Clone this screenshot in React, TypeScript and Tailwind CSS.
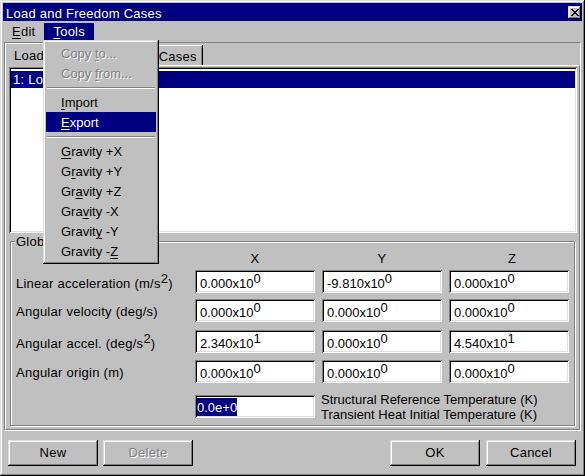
import React from 'react';

// classic 3D bevels
const raised =
  'shadow-[inset_-1px_-1px_0_#000,inset_1px_1px_0_#dfdfdf,inset_-2px_-2px_0_#808080,inset_2px_2px_0_#fff]';
const sunken =
  'shadow-[inset_1px_1px_0_#808080,inset_-1px_-1px_0_#fff,inset_2px_2px_0_#000,inset_-2px_-2px_0_#dfdfdf]';

type Val = [string, string];

const rows: { label: React.ReactNode; values: Val[]; mt: string }[] = [
  {
    label: (
      <>
        Linear acceleration (m/s<span className="align-super leading-none">2</span>)
      </>
    ),
    values: [
      ['0.000', '0'],
      ['-9.810', '0'],
      ['0.000', '0'],
    ],
    mt: 'mt-[4px]',
  },
  {
    label: <>Angular velocity (deg/s)</>,
    values: [
      ['0.000', '0'],
      ['0.000', '0'],
      ['0.000', '0'],
    ],
    mt: 'mt-[6px]',
  },
  {
    label: (
      <>
        Angular accel. (deg/s<span className="align-super leading-none">2</span>)
      </>
    ),
    values: [
      ['2.340', '1'],
      ['0.000', '0'],
      ['4.540', '1'],
    ],
    mt: 'mt-[8px]',
  },
  {
    label: <>Angular origin (m)</>,
    values: [
      ['0.000', '0'],
      ['0.000', '0'],
      ['0.000', '0'],
    ],
    mt: 'mt-[7px]',
  },
];

function Field({ v }: { v: Val }) {
  return (
    <div className={`h-[23px] w-[120px] bg-white ${sunken} flex items-center pl-[5px] leading-[15px] pt-[1px] tracking-normal`}>
      <span>
        {v[0]}x10<span className="align-super leading-none">{v[1]}</span>
      </span>
    </div>
  );
}

function U({ children }: { children: React.ReactNode }) {
  return <span className="underline underline-offset-[2px] decoration-1">{children}</span>;
}

function MenuItem({ children, disabled, active }: { children: React.ReactNode; disabled?: boolean; active?: boolean }) {
  const tone = disabled
    ? 'text-[#808080] [text-shadow:1px_1px_0_#fff]'
    : active
      ? 'bg-[#000080] text-white'
      : 'text-black';
  return <div className={`h-[20px] flex items-center pl-[15px] ${tone}`}>{children}</div>;
}

function Separator() {
  return (
    <div className="h-[9px] flex flex-col justify-center px-[1px]">
      <div className="h-px bg-[#808080]" />
      <div className="h-px bg-white" />
    </div>
  );
}

function Button({ children, disabled }: { children: React.ReactNode; disabled?: boolean }) {
  return (
    <div
      className={`w-[90px] h-[26px] flex items-center justify-center ${raised} ${
        disabled ? 'text-[#808080] [text-shadow:1px_1px_0_#fff]' : 'text-black'
      }`}
    >
      {children}
    </div>
  );
}

export default function App(): React.ReactElement {
  return (
    <div
      className={`relative w-[585px] h-[476px] bg-[#c0c0c0] p-[3px] flex flex-col text-[13px] tracking-[0.25px] text-black font-['Liberation_Sans',Arial,sans-serif] ${raised}`}
    >
      {/* Title bar */}
      <div className="h-[18px] bg-[#000080] flex items-center justify-between pl-[3px] pr-[1px]">
        <span className="text-white leading-[15px] pt-[2px]">Load and Freedom Cases</span>
        <div className={`w-[13px] h-[13px] bg-[#c0c0c0] ${raised} flex items-center justify-center`}>
          <svg width="8" height="7" viewBox="0 0 8 7" shapeRendering="crispEdges">
            <path d="M0 0h2v1h1v1h2V1h1V0h2v1H7v1H6v1H5v1h1v1h1v1h1v1H6V6H5V5H3v1H2v1H0V6h1V5h1V4h1V3H2V2H1V1H0z" fill="#000" />
          </svg>
        </div>
      </div>

      {/* Menu bar */}
      <div className="h-[19px] pt-[2px] flex">
        <div className="h-[17px] px-[9px] flex items-center">
          <span>
            <U>E</U>dit
          </span>
        </div>
        <div className="h-[17px] px-[9px] flex items-center bg-[#000080] text-white">
          <span>
            <U>T</U>ools
          </span>
        </div>
      </div>

      {/* Frame around the tab control */}
      <div className="mt-[2px] mx-[1px] border-t border-l border-t-[#808080] border-l-[#808080] border-r border-b border-r-white border-b-white flex flex-col">
        {/* Tabs */}
        <div className="h-[22px] flex items-end">
          <div className="relative z-10 -mb-px h-[23px] w-[90px] bg-[#c0c0c0] border-t border-l border-white shadow-[inset_-1px_0_0_#808080,1px_0_0_#000] pl-[8px] pt-[4px] leading-[15px]">
            Load Cases
          </div>
          <div className="h-[20px] w-[106px] ml-px bg-[#c0c0c0] border-t border-white shadow-[inset_-1px_0_0_#808080,1px_0_0_#000] pl-[5px] pt-[3px] leading-[15px] whitespace-nowrap">
            Freedom Cases
          </div>
        </div>

        {/* Tab panel */}
        <div className="border-t border-l border-white border-r border-b border-r-[#808080] border-b-[#808080] pt-[1px] pb-[3px] flex flex-col">
          {/* List box */}
          <div className={`ml-[3px] mr-[2px] h-[166px] bg-white ${sunken} pt-[4px] px-[2px]`}>
            <div className="h-[17px] bg-[#000080] text-white leading-[17px] pl-[2px]">1: Load Case 1</div>
          </div>

          {/* Group box */}
          <div className="relative mt-[8px] ml-[4px] mr-[4px] border border-[#808080] shadow-[inset_1px_1px_0_#fff,1px_1px_0_#fff] pl-[5px] pt-[9px] pb-[7px]">
            <span className="absolute left-[4px] -top-[8px] bg-[#c0c0c0] px-px leading-[15px]">Global Acceleration</span>

            <div className="grid grid-cols-[172px_120px_120px_120px] gap-x-[7px]">
              <div />
              <div className="h-[15px] leading-[15px] text-center">X</div>
              <div className="h-[15px] leading-[15px] text-center">Y</div>
              <div className="h-[15px] leading-[15px] text-center pl-[6px]">Z</div>
            </div>

            {rows.map((r, i) => (
              <div key={i} className={`grid grid-cols-[172px_120px_120px_120px] gap-x-[7px] ${r.mt}`}>
                <div className="h-[23px] flex items-center leading-[15px] pt-[1px] whitespace-nowrap">
                  <span>{r.label}</span>
                </div>
                {r.values.map((v, j) => (
                  <Field key={j} v={v} />
                ))}
              </div>
            ))}

            <div className="grid grid-cols-[172px_120px_120px_120px] gap-x-[7px] mt-[12px]">
              <div />
              <div className={`h-[23px] w-[120px] bg-white ${sunken} flex items-center pl-[2px]`}>
                <span className="bg-[#000080] text-white leading-[17px] pt-px tracking-normal">0.0e+0</span>
              </div>
              <div className="col-span-2 h-[23px] flex flex-col justify-center -ml-px tracking-normal">
                <div className="leading-[15px] whitespace-nowrap">Structural Reference Temperature (K)</div>
                <div className="leading-[15px] whitespace-nowrap">Transient Heat Initial Temperature (K)</div>
              </div>
            </div>
          </div>
        </div>
      </div>

      {/* Buttons */}
      <div className="mt-[9px] pl-[5px] pr-[6px] flex justify-between">
        <div className="flex gap-[5px]">
          <Button>New</Button>
          <Button disabled>Delete</Button>
        </div>
        <div className="flex gap-[6px]">
          <Button>OK</Button>
          <Button>Cancel</Button>
        </div>
      </div>

      {/* Tools menu, dropped down */}
      <div className={`absolute z-30 left-[43px] top-[40px] w-[116px] bg-[#c0c0c0] ${raised} p-[3px] flex flex-col leading-[15px] tracking-normal`}>
        <MenuItem disabled>
          <span>
            Copy <U>t</U>o...
          </span>
        </MenuItem>
        <MenuItem disabled>
          <span>
            Copy <U>f</U>rom...
          </span>
        </MenuItem>
        <Separator />
        <MenuItem>
          <span>
            <U>I</U>mport
          </span>
        </MenuItem>
        <MenuItem active>
          <span>
            <U>E</U>xport
          </span>
        </MenuItem>
        <Separator />
        <MenuItem>
          <span>
            <U>G</U>ravity +X
          </span>
        </MenuItem>
        <MenuItem>
          <span>
            G<U>r</U>avity +Y
          </span>
        </MenuItem>
        <MenuItem>
          <span>
            Gr<U>a</U>vity +Z
          </span>
        </MenuItem>
        <MenuItem>
          <span>
            Gra<U>v</U>ity -X
          </span>
        </MenuItem>
        <MenuItem>
          <span>
            Gravit<U>y</U> -Y
          </span>
        </MenuItem>
        <MenuItem>
          <span>
            Gravity -<U>Z</U>
          </span>
        </MenuItem>
      </div>
    </div>
  );
}
